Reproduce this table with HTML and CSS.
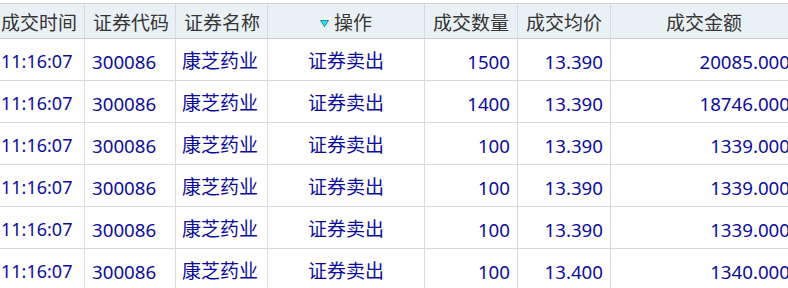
FILE: index.html
```html
<!DOCTYPE html>
<html lang="zh-CN">
<head>
<meta charset="utf-8">
<title>成交查询</title>
<link rel="stylesheet" href="styles.css">
</head>
<body>
<table class="grid">
  <colgroup>
    <col class="c-time"><col class="c-code"><col class="c-name"><col class="c-op"><col class="c-qty"><col class="c-price"><col class="c-amt">
  </colgroup>
  <thead>
    <tr>
      <th class="l0">成交时间</th>
      <th class="l">证券代码</th>
      <th class="l">证券名称</th>
      <th class="c"><svg class="sort" width="9" height="7" viewBox="0 0 9 7"><polygon points="0.5,0.5 8.5,0.5 4.5,6.5" fill="#1ee6ee" stroke="#1a6f78" stroke-width="0.8"/></svg>操作</th>
      <th class="c">成交数量</th>
      <th class="c">成交均价</th>
      <th class="c">成交金额</th>
    </tr>
  </thead>
  <tbody>
    <tr><td class="l0 t">11:16:07</td><td class="l">300086</td><td class="l2 zh">康芝药业</td><td class="c zh">证券卖出</td><td class="r">1500</td><td class="r">13.390</td><td class="r">20085.000</td></tr>
    <tr><td class="l0 t">11:16:07</td><td class="l">300086</td><td class="l2 zh">康芝药业</td><td class="c zh">证券卖出</td><td class="r">1400</td><td class="r">13.390</td><td class="r">18746.000</td></tr>
    <tr><td class="l0 t">11:16:07</td><td class="l">300086</td><td class="l2 zh">康芝药业</td><td class="c zh">证券卖出</td><td class="r">100</td><td class="r">13.390</td><td class="r">1339.000</td></tr>
    <tr><td class="l0 t">11:16:07</td><td class="l">300086</td><td class="l2 zh">康芝药业</td><td class="c zh">证券卖出</td><td class="r">100</td><td class="r">13.390</td><td class="r">1339.000</td></tr>
    <tr><td class="l0 t">11:16:07</td><td class="l">300086</td><td class="l2 zh">康芝药业</td><td class="c zh">证券卖出</td><td class="r">100</td><td class="r">13.390</td><td class="r">1339.000</td></tr>
    <tr><td class="l0 t">11:16:07</td><td class="l">300086</td><td class="l2 zh">康芝药业</td><td class="c zh">证券卖出</td><td class="r">100</td><td class="r">13.400</td><td class="r">1340.000</td></tr>
  </tbody>
</table>
</body>
</html>
```
FILE: styles.css
```css
html, body {
  margin: 0;
  padding: 0;
  background: #ffffff;
  overflow: hidden;
}
body {
  padding-top: 3px;
  font-family: "Noto Sans", "Noto Sans CJK SC", sans-serif;
  font-size: 18.7px;
}
.grid {
  table-layout: fixed;
  width: 798px;
  border-collapse: separate;
  border-spacing: 0;
}
.c-time { width: 85px; }
.c-code { width: 91px; }
.c-name { width: 92px; }
.c-op { width: 157px; }
.c-qty { width: 93px; }
.c-price { width: 93px; }
.c-amt { width: 187px; }

th, td {
  box-sizing: border-box;
  border-right: 1px solid #d9d9d9;
  border-bottom: 1px solid #d9d9d9;
  white-space: nowrap;
  overflow: hidden;
  padding: 0;
}
th {
  height: 36px;
  background: #eaf1f5;
  border-top: 1px solid #cfd3d6;
  border-bottom: 1px solid #c9cdd0;
  border-right-color: #d4dadf;
  color: #353535;
  font-weight: normal;
  font-size: 19px;
  padding-top: 3px;
  line-height: 30px;
}
td {
  height: 42px;
  color: #0c0c9c;
  padding-top: 3px;
  line-height: 37px;
}
td.zh { font-size: 19px; }
td.t { font-size: 18px; }
.l0 { text-align: left; padding-left: 1px; }
.l { text-align: left; padding-left: 7px; }
.l2 { text-align: left; padding-left: 6px; }
th.l { padding-left: 8px; }
.c { text-align: center; }
.r { text-align: right; padding-right: 7px; }
.sort {
  display: inline-block;
  margin-right: 5px;
  vertical-align: 3px;
}
```
